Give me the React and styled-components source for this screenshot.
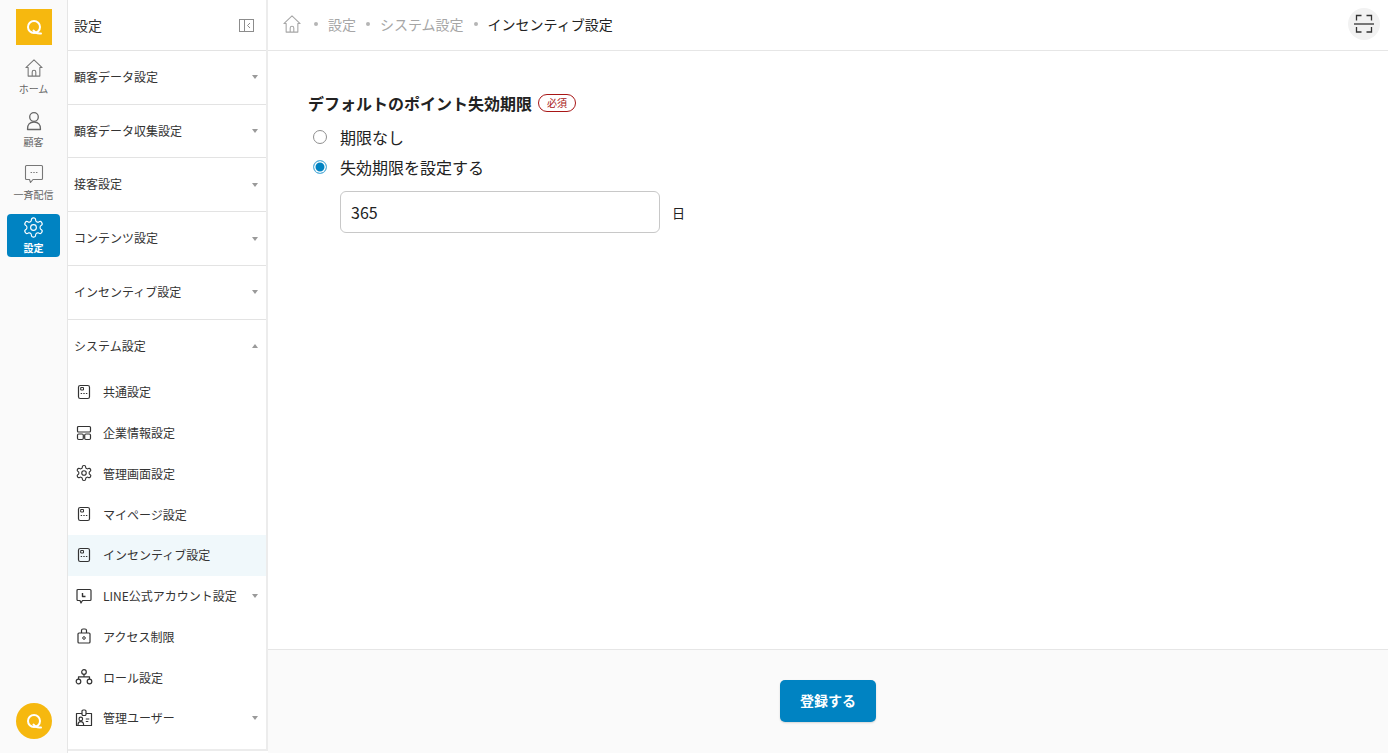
import React from "react";
import styled, { createGlobalStyle } from "styled-components";

const GlobalStyle = createGlobalStyle`
  * { box-sizing: border-box; }
  html, body { margin: 0; padding: 0; height: 100%; }
  body {
    font-family: "Noto Sans CJK JP", "Noto Sans", sans-serif;
    color: #222;
    background: #fff;
  }
`;

const Page = styled.div`
  display: flex;
  width: 1388px;
  height: 753px;
  overflow: hidden;
`;

const Rail = styled.nav`
  width: 68px;
  flex: none;
  display: flex;
  flex-direction: column;
  align-items: center;
  padding: 9px 0 14px;
  background: #fafafa;
  border-right: 1px solid #e6e6e6;
`;

const RailItems = styled.div`
  display: flex;
  flex-direction: column;
  align-items: center;
  gap: 10px;
  margin-top: 10px;
  flex: 1;
`;

const RailItem = styled.a`
  width: 53px;
  height: 43px;
  display: flex;
  flex-direction: column;
  align-items: center;
  padding-top: 3px;
  border-radius: 4px;
  font-size: 10px;
  line-height: 14px;
  color: ${(p) => (p.$active ? "#fff" : "#666")};
  font-weight: ${(p) => (p.$active ? 700 : 400)};
  background: ${(p) => (p.$active ? "#0083c2" : "transparent")};
`;

const RailIcon = styled.span`
  height: 20px;
  margin-bottom: 4px;
  display: flex;
  align-items: center;
  justify-content: center;
`;

const LogoSquare = styled.div`
  width: 36px;
  height: 36px;
  flex: none;
  background: #f6b80f;
  display: flex;
  align-items: center;
  justify-content: center;
`;

const LogoCircle = styled(LogoSquare)`
  border-radius: 50%;
`;

const Side = styled.aside`
  width: 200px;
  height: 751px;
  flex: none;
  background: #fff;
  border-right: 2px solid #ececec;
  border-bottom: 2px solid #ececec;
`;

const SideHead = styled.div`
  height: 51px;
  display: flex;
  align-items: center;
  justify-content: space-between;
  padding: 0 12px 0 6px;
  font-size: 14px;
  color: #333;
  border-bottom: 1px solid #e3e3e3;
`;

const Caret = styled.span`
  width: 0;
  height: 0;
  border-left: 3px solid transparent;
  border-right: 3px solid transparent;
  ${(p) => (p.$up ? "border-bottom: 4px solid #9a9a9a;" : "border-top: 4px solid #9a9a9a;")}
`;

const Section = styled.div`
  height: ${(p) => (p.$last ? "52.5px" : "53.72px")};
  display: flex;
  align-items: center;
  justify-content: space-between;
  padding: ${(p) => (p.$last ? "0 8px 1px 6px" : "0 8px 2px 6px")};
  font-size: 12px;
  color: #333;
  border-bottom: ${(p) => (p.$last ? "none" : "1px solid #e3e3e3")};
  ${Caret} { margin-top: 2px; }
`;

const SubItem = styled.a`
  height: 40.75px;
  display: flex;
  align-items: center;
  padding: 0 8px 1px 7px;
  font-size: 12px;
  color: #333;
  background: ${(p) => (p.$active ? "#f0f8fb" : "transparent")};
  svg { flex: none; }
`;

const SubLabel = styled.span`
  flex: 1;
  margin-left: 10px;
  white-space: nowrap;
`;

const Main = styled.main`
  flex: 1;
  min-width: 0;
  display: flex;
  flex-direction: column;
`;

const TopBar = styled.header`
  height: 51px;
  flex: none;
  display: flex;
  align-items: center;
  padding: 0 8px 2px 15px;
  border-bottom: 1px solid #e6e6e6;
`;

const Crumbs = styled.ol`
  flex: 1;
  display: flex;
  align-items: center;
  list-style: none;
  margin: 0;
  padding: 0;
  font-size: 14px;
`;

const Crumb = styled.li`
  display: flex;
  align-items: center;
  color: ${(p) => (p.$current ? "#222" : "#a6a6a6")};
  &:first-child { margin-right: 3px; }
  &:not(:first-child)::before {
    content: "";
    width: 4px;
    height: 4px;
    border-radius: 50%;
    background: #b5b5b5;
    margin: 0 10px;
  }
`;

const RoundButton = styled.button`
  width: 32px;
  height: 32px;
  padding: 0;
  border: none;
  border-radius: 50%;
  background: #f2f2f2;
  display: flex;
  align-items: center;
  justify-content: center;
`;

const Content = styled.section`
  flex: 1;
  padding: 41px 40px 0;
`;

const FieldTitle = styled.div`
  display: flex;
  align-items: center;
  gap: 6px;
  height: 22px;
  margin-bottom: 8px;
  font-size: 16px;
  font-weight: 700;
  color: #222;
`;

const Required = styled.span`
  width: 38px;
  height: 18px;
  border: 1px solid #a81616;
  border-radius: 9px;
  color: #a81616;
  font-size: 10px;
  font-weight: 400;
  line-height: 16px;
  text-align: center;
`;

const RadioRow = styled.label`
  display: flex;
  align-items: center;
  height: 30px;
  font-size: 16px;
  color: #222;
`;

const Radio = styled.span`
  width: 14px;
  height: 14px;
  margin: 0 13px 0 5px;
  border-radius: 50%;
  background: #fff;
  border: 1px solid ${(p) => (p.$checked ? "#62b6de" : "#8f8f8f")};
  ${(p) => p.$checked && "box-shadow: inset 0 0 0 1.5px #fff; background: #0083c2;"}
`;

const DaysRow = styled.div`
  display: flex;
  align-items: center;
  gap: 12px;
  margin: 9px 0 0 32px;
  font-size: 13px;
`;

const DaysInput = styled.div`
  width: 320px;
  height: 42px;
  display: flex;
  align-items: center;
  padding: 0 10px;
  border: 1px solid #c8c8c8;
  border-radius: 6px;
  font-size: 16px;
  color: #222;
`;

const Footer = styled.footer`
  height: 104px;
  flex: none;
  display: flex;
  justify-content: center;
  padding-top: 30px;
  background: #fafafa;
  border-top: 1px solid #e6e6e6;
`;

const Submit = styled.button`
  width: 96px;
  height: 42px;
  padding: 0 0 2px;
  border: none;
  border-radius: 5px;
  background: #0083c2;
  color: #fff;
  font-family: inherit;
  font-size: 14px;
  font-weight: 700;
  box-shadow: 0 1px 2px rgba(0, 0, 0, 0.15);
`;

const Q = () => (
  <svg width="18" height="18" viewBox="0 0 18 18" fill="none" stroke="#fff" strokeWidth="2">
    <circle cx="9" cy="9" r="6" />
    <path d="M8.500 12.500c1.500 2.500 3.500 3.500 7.500 3" strokeLinecap="round" />
  </svg>
);

const Home = ({ color = "#777" }) => (
  <svg width="18" height="18" viewBox="0 0 20 20" fill="none" stroke={color} strokeWidth="1.200" strokeLinejoin="round">
    <path d="M1 9.500 10 1l9 8.500h-2.500v9.500h-13V9.500z" />
    <path d="M8 19v-4.500a2 2 0 0 1 4 0V19" />
  </svg>
);

const User = () => (
  <svg width="20" height="20" viewBox="0 0 20 20" fill="none" stroke="#666" strokeWidth="1.300">
    <circle cx="10" cy="6" r="4.300" />
    <path d="M3.500 18.500c-.5-5 2.500-7.500 6.500-7.500s7 2.500 6.500 7.500z" strokeLinejoin="round" />
  </svg>
);

const Chat = () => (
  <svg width="20" height="20" viewBox="0 0 20 20" fill="none" stroke="#777" strokeWidth="1.100" strokeLinejoin="round">
    <path d="M2.500 1.500h15a1 1 0 0 1 1 1v12a1 1 0 0 1-1 1H9l-2.500 3-1-3h-3a1 1 0 0 1-1-1v-12a1 1 0 0 1 1-1z" />
    <path d="M7 8.500h.6M9.700 8.500h.6M12.400 8.500h.6" strokeLinecap="round" />
  </svg>
);

const Gear = ({ size = 23, color = "#fff", weight = 1.2 }) => (
  <svg width={size} height={size} viewBox="0 0 24 24" fill="none" stroke={color} strokeWidth={weight} strokeLinejoin="round">
    <path d="M12.220 2h-.44a2 2 0 0 0-2 2v.18a2 2 0 0 1-1 1.730l-.43.25a2 2 0 0 1-2 0l-.15-.08a2 2 0 0 0-2.730.73l-.22.38a2 2 0 0 0 .73 2.730l.15.1a2 2 0 0 1 1 1.720v.51a2 2 0 0 1-1 1.740l-.15.09a2 2 0 0 0-.73 2.730l.22.38a2 2 0 0 0 2.730.73l.15-.08a2 2 0 0 1 2 0l.43.25a2 2 0 0 1 1 1.730V20a2 2 0 0 0 2 2h.44a2 2 0 0 0 2-2v-.18a2 2 0 0 1 1-1.730l.43-.25a2 2 0 0 1 2 0l.15.08a2 2 0 0 0 2.730-.73l.22-.39a2 2 0 0 0-.73-2.730l-.15-.08a2 2 0 0 1-1-1.740v-.5a2 2 0 0 1 1-1.740l.15-.09a2 2 0 0 0 .73-2.730l-.22-.38a2 2 0 0 0-2.730-.73l-.15.08a2 2 0 0 1-2 0l-.43-.25a2 2 0 0 1-1-1.730V4a2 2 0 0 0-2-2z" />
    <circle cx="12" cy="12" r="3" />
  </svg>
);

const SubSvg = ({ children }) => (
  <svg width="18" height="18" viewBox="0 0 18 18" fill="none" stroke="#333" strokeWidth="1.200" strokeLinejoin="round">
    {children}
  </svg>
);

const WindowIcon = () => (
  <SubSvg>
    <rect x="3.500" y="2.500" width="11" height="13" rx="1.800" />
    <rect x="5.700" y="4.500" width="2.800" height="2.500" strokeWidth="1" />
    <path d="M5.700 10.500h1.400M8.300 10.500h1.400M10.900 10.500h1.400" strokeWidth="1.100" />
  </SubSvg>
);

const LayoutIcon = () => (
  <SubSvg>
    <rect x="2.500" y="2.500" width="13" height="5.500" rx="1" />
    <rect x="2.500" y="10" width="5.800" height="5.500" rx="1.200" />
    <rect x="9.700" y="10" width="5.800" height="5.500" rx="1.200" />
  </SubSvg>
);

const LineIcon = () => (
  <SubSvg>
    <path d="M3 2.500h12a1 1 0 0 1 1 1v9a1 1 0 0 1-1 1H7.500l-1.500 2.500-1-2.500H3a1 1 0 0 1-1-1v-9a1 1 0 0 1 1-1z" />
    <path d="M7.500 6v3.500h3" strokeWidth="1.400" />
  </SubSvg>
);

const LockIcon = () => (
  <SubSvg>
    <rect x="3" y="6" width="12" height="10" rx="1" />
    <path d="M6.500 6V3.500a1.500 1.500 0 0 1 1.500-1.500h2a1.500 1.500 0 0 1 1.500 1.500V6" />
    <circle cx="9" cy="11" r="1.300" strokeWidth="1" />
  </SubSvg>
);

const RoleIcon = () => (
  <SubSvg>
    <circle cx="9" cy="4" r="2.300" />
    <circle cx="3.500" cy="13.500" r="2.300" />
    <circle cx="14.500" cy="13.500" r="2.300" />
    <path d="M3.500 11.200V8.800h11v2.400M9 6.300v2.500" />
  </SubSvg>
);

const BadgeIcon = () => (
  <SubSvg>
    <path d="M7 4.500H1.500v12h15v-12H11" />
    <rect x="7" y="1" width="4" height="5.500" rx="1.200" />
    <circle cx="5.800" cy="10" r="1.800" />
    <path d="M3 16c0-2.200 1.200-3.300 2.800-3.300S8.600 13.800 8.600 16M10.800 10h3.500M10.800 12.500h2.500" />
  </SubSvg>
);

const CollapseIcon = () => (
  <svg width="15" height="13" viewBox="0 0 15 13" fill="none" stroke="#8c8c8c" strokeWidth="1">
    <rect x=".5" y=".5" width="14" height="12" />
    <path d="M5.500.5v12M11 4l-2.500 2.500L11 9" />
  </svg>
);

const ScanIcon = () => (
  <svg width="20" height="20" viewBox="0 0 20 20" fill="none" stroke="#333" strokeWidth="1.300">
    <path d="M2.500 6.500V1.500h5M12.500 1.500h5v5M2.500 13v5h5M12.500 18h5v-5" />
    <path d="M0 10h20" />
  </svg>
);

const railItems = [
  { label: "ホーム", icon: <Home /> },
  { label: "顧客", icon: <User /> },
  { label: "一斉配信", icon: <Chat /> },
  { label: "設定", icon: <Gear />, active: true },
];

const sections = ["顧客データ設定", "顧客データ収集設定", "接客設定", "コンテンツ設定", "インセンティブ設定"];

const subItems = [
  { label: "共通設定", icon: <WindowIcon /> },
  { label: "企業情報設定", icon: <LayoutIcon /> },
  { label: "管理画面設定", icon: <Gear size={18} color="#333" weight={1.5} /> },
  { label: "マイページ設定", icon: <WindowIcon /> },
  { label: "インセンティブ設定", icon: <WindowIcon />, active: true },
  { label: "LINE公式アカウント設定", icon: <LineIcon />, caret: true },
  { label: "アクセス制限", icon: <LockIcon /> },
  { label: "ロール設定", icon: <RoleIcon /> },
  { label: "管理ユーザー", icon: <BadgeIcon />, caret: true },
];

export default function App() {
  return (
    <Page>
      <GlobalStyle />
      <Rail>
        <LogoSquare><Q /></LogoSquare>
        <RailItems>
          {railItems.map((item) => (
            <RailItem key={item.label} $active={item.active}>
              <RailIcon>{item.icon}</RailIcon>
              {item.label}
            </RailItem>
          ))}
        </RailItems>
        <LogoCircle><Q /></LogoCircle>
      </Rail>
      <Side>
        <SideHead>
          設定
          <CollapseIcon />
        </SideHead>
        {sections.map((label) => (
          <Section key={label}>
            {label}
            <Caret />
          </Section>
        ))}
        <Section $last>
          システム設定
          <Caret $up />
        </Section>
        {subItems.map((item) => (
          <SubItem key={item.label} $active={item.active}>
            {item.icon}
            <SubLabel>{item.label}</SubLabel>
            {item.caret && <Caret />}
          </SubItem>
        ))}
      </Side>
      <Main>
        <TopBar>
          <Crumbs>
            <Crumb><Home color="#a6a6a6" /></Crumb>
            <Crumb>設定</Crumb>
            <Crumb>システム設定</Crumb>
            <Crumb $current>インセンティブ設定</Crumb>
          </Crumbs>
          <RoundButton aria-label="scan"><ScanIcon /></RoundButton>
        </TopBar>
        <Content>
          <FieldTitle>
            デフォルトのポイント失効期限
            <Required>必須</Required>
          </FieldTitle>
          <RadioRow><Radio />期限なし</RadioRow>
          <RadioRow><Radio $checked />失効期限を設定する</RadioRow>
          <DaysRow>
            <DaysInput>365</DaysInput>
            日
          </DaysRow>
        </Content>
        <Footer>
          <Submit>登録する</Submit>
        </Footer>
      </Main>
    </Page>
  );
}
